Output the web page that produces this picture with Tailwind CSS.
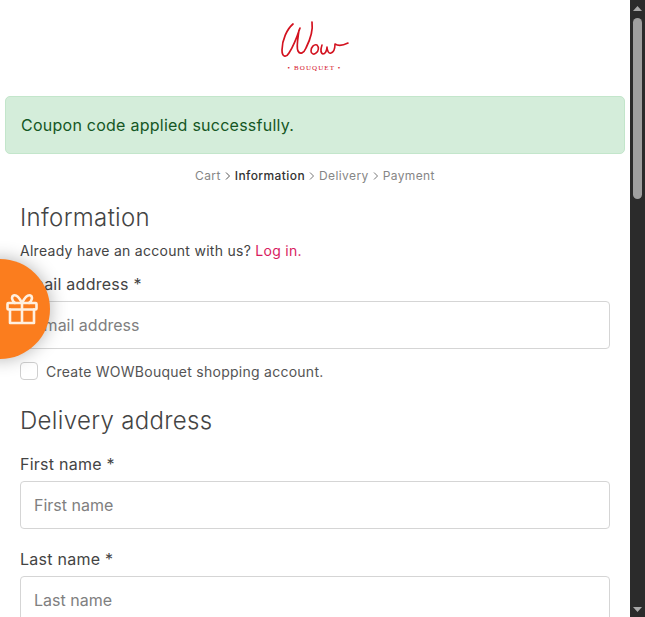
<!doctype html>
<html>
<head>
<meta charset="utf-8">
<script src="https://cdn.jsdelivr.net/npm/@tailwindcss/browser@4"></script>
</head>
<body class="h-[617px] w-[645px] overflow-hidden bg-white font-['Inter',sans-serif]">
<div class="flex h-[617px] w-[645px]">
  <main class="relative h-[617px] w-[630px] overflow-hidden">
    <div class="flex h-[96px] flex-col items-center pt-[20px]">
      <svg class="ml-[-1px] h-[44px] w-[70px]" viewBox="0 0 70 44" fill="none" stroke="#d3121f" stroke-linecap="round" stroke-linejoin="round" aria-label="Wow">
        <path stroke-width="1.7" d="M13 4C7 9 2 20 2 30c0 7 4 8 7 3 4-6 8-16 11-25M19 10c-1 8-3 17-1 21 2 4 6 2 8-3 4-8 7-19 6-26"/>
        <path stroke-width="1.6" d="M37 25c-3-1-6 2-6 6 0 3 3 4 5 2 3-2 3-6 1-8M42 25c-1 3-2 8 1 9 2 0 4-3 4-7 0 4 2 7 4 6 3-1 4-5 4-9 3 2 7 2 13-1"/>
      </svg>
      <div class="ml-[-1px] text-[7px] leading-[8px] tracking-[1.1px] text-[#d3121f] font-['Liberation_Serif',serif]">• BOUQUET •</div>
    </div>

    <div class="mx-[5px] flex h-[58px] items-center rounded-[5px] border border-[#c3e6cb] bg-[#d4edda] px-[15px] text-[16px] tracking-[0.25px] text-[#155724]">Coupon code applied successfully.</div>

    <nav class="mt-[13px] flex h-[18px] items-center justify-center gap-[4px] text-[12px] tracking-[0.4px] text-[#868686]">
      <span>Cart</span>
      <svg class="h-[10px] w-[6px]" viewBox="0 0 6 10" fill="none" stroke="#555" stroke-width="1"><path d="M1 1.500 4.500 5 1 8.500"/></svg>
      <span class="font-medium text-[#333]">Information</span>
      <svg class="h-[10px] w-[6px]" viewBox="0 0 6 10" fill="none" stroke="#777" stroke-width="1"><path d="M1 1.500 4.500 5 1 8.500"/></svg>
      <span>Delivery</span>
      <svg class="h-[10px] w-[6px]" viewBox="0 0 6 10" fill="none" stroke="#777" stroke-width="1"><path d="M1 1.500 4.500 5 1 8.500"/></svg>
      <span>Payment</span>
    </nav>

    <form class="px-[20px]">
      <h2 class="mt-[17px] text-[24px] leading-[32px] font-light tracking-[0.33px] text-[#444]">Information</h2>
      <p class="mt-[7px] text-[14px] leading-[20px] tracking-[0.28px] text-[#444]">Already have an account with us? <a class="text-[#d81b60]">Log in.</a></p>

      <label class="mt-[13px] block text-[16px] leading-[20px] tracking-[0.25px] text-[#444]">Email address *</label>
      <div class="mt-[7px] flex h-[48px] items-center rounded-[4px] border border-[#d5d5d5] px-[13px] text-[16px] text-[#808080]">Email address</div>

      <div class="mt-[12px] flex h-[20px] items-center gap-[8px]">
        <span class="h-[18px] w-[18px] rounded-[4px] border border-[#cfcfcf] bg-white"></span>
        <span class="text-[14px] tracking-[0.26px] text-[#555]">Create WOWBouquet shopping account.</span>
      </div>

      <h2 class="mt-[24px] text-[24px] leading-[32px] font-light tracking-[0.33px] text-[#444]">Delivery address</h2>

      <label class="mt-[17px] block text-[16px] leading-[20px] tracking-[0.25px] text-[#444]">First name *</label>
      <div class="mt-[7px] flex h-[48px] items-center rounded-[4px] border border-[#d5d5d5] px-[13px] text-[16px] text-[#808080]">First name</div>

      <label class="mt-[20px] block text-[16px] leading-[20px] tracking-[0.25px] text-[#444]">Last name *</label>
      <div class="mt-[7px] flex h-[48px] items-center rounded-[4px] border border-[#d5d5d5] px-[13px] text-[16px] text-[#808080]">Last name</div>
    </form>

    <div class="absolute top-[259px] left-[-50px] flex h-[100px] w-[100px] items-center justify-end rounded-full bg-[#fb7d1e] pr-[12px] shadow-[0_0_18px_rgba(0,0,0,0.3)]">
      <svg class="h-[32px] w-[32px]" viewBox="0 0 32 32" fill="none" stroke="#fff0e0" stroke-width="2.6" stroke-linejoin="round" stroke-linecap="round">
        <rect x="1.500" y="10" width="29" height="6.500" rx="1"/>
        <path d="M4 16.500V30h24V16.500M16 10v20"/>
        <path d="M16 10c-3-6-6-8.500-8.500-7.500S6 8.500 9 10M16 10c3-6 6-8.500 8.500-7.500S26 8.500 23 10"/>
      </svg>
    </div>
  </main>

  <aside class="flex h-[617px] w-[15px] flex-col items-center bg-[#2b2b2b]">
    <svg class="mt-[6px] h-[5px] w-[9px]" viewBox="0 0 9 5"><path fill="#a8a8a8" d="M4.500 0 9 5H0z"/></svg>
    <div class="mt-[7px] h-[181px] w-[9px] rounded-[5px] bg-[#9f9f9f]"></div>
    <div class="flex-1"></div>
    <svg class="mb-[5px] h-[5px] w-[9px]" viewBox="0 0 9 5"><path fill="#a8a8a8" d="M0 0h9L4.500 5z"/></svg>
  </aside>
</div>
</body>
</html>
